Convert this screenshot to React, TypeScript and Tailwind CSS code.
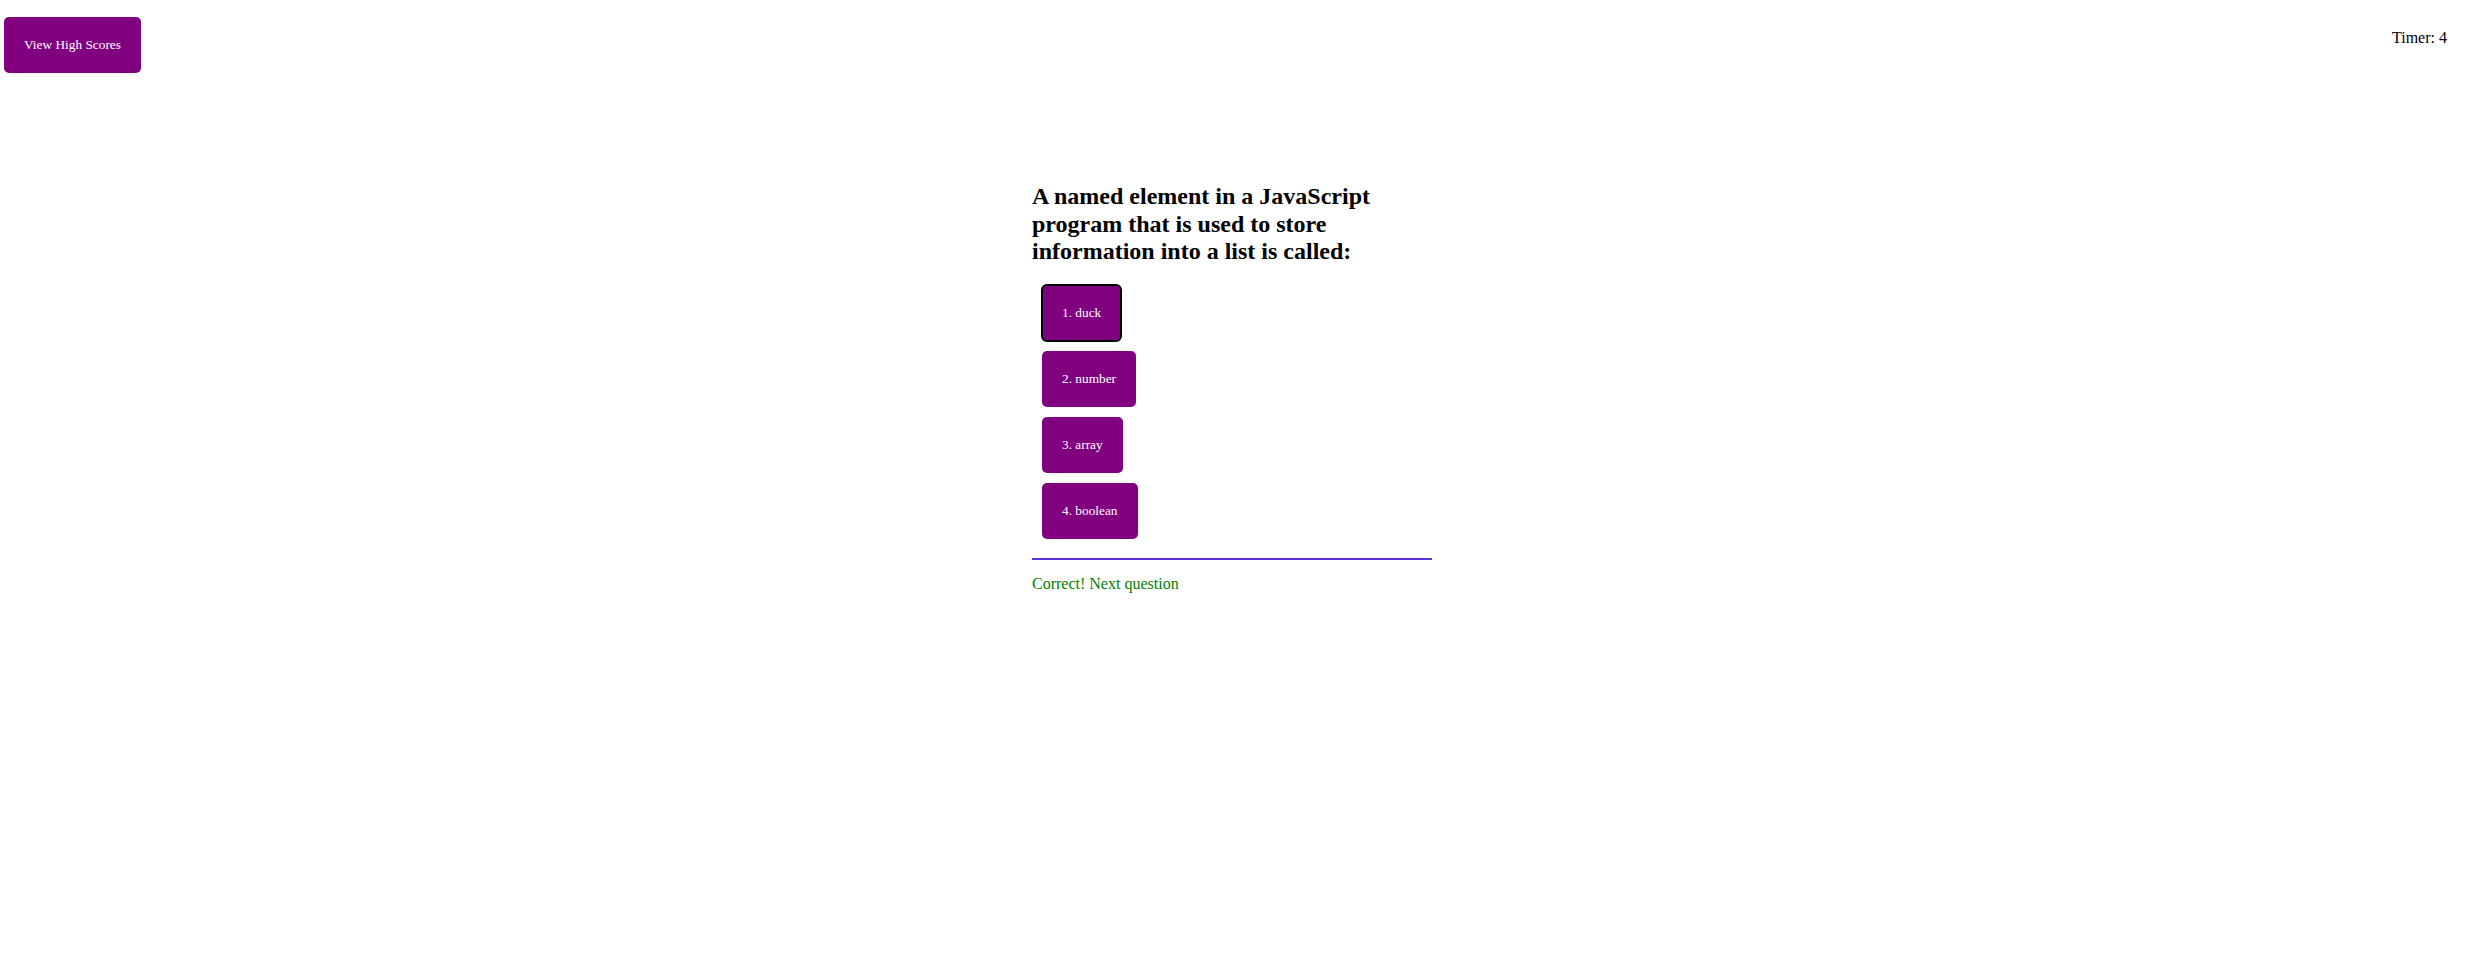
import React from "react";

export default function App() {
  const answers = ["1. duck", "2. number", "3. array", "4. boolean"];
  return (
    <div className="min-h-screen bg-white font-['Liberation_Serif','Times_New_Roman',serif] text-black">
      <header className="flex items-start justify-between h-[73px]">
        <button className="ml-[4px] mt-[17px] h-[56px] rounded-[5px] bg-[#800080] px-[20px] text-[13.33px] leading-[16px] text-white">
          View High Scores
        </button>
        <div className="mt-[29px] mr-[31px] text-[16px] leading-[18px]">Timer: 4</div>
      </header>
      <main className="mx-auto w-[414px] pr-[14px] pt-[110px]">
        <h2 className="text-[24px] font-bold leading-[27.6px]">
          A named element in a JavaScript program that is used to store information into a list is called:
        </h2>
        <div className="mt-[19px] flex flex-col items-start gap-[10px] pl-[10px]">
          {answers.map((a, i) => (
            <button
              key={a}
              className={
                i === 0
                  ? "h-[56px] rounded-[5px] bg-[#800080] px-[20px] text-[13.33px] leading-[16px] text-white outline-2 outline-solid outline-black outline-offset-[-1px]"
                  : "h-[56px] rounded-[5px] bg-[#800080] px-[20px] text-[13.33px] leading-[16px] text-white"
              }
            >
              {a}
            </button>
          ))}
        </div>
        <div className="mt-[19px] h-[2px] w-[400px] bg-[#5a32e0]" />
        <p className="mt-[15px] text-[16px] leading-[18.4px] text-[#008000]">Correct! Next question</p>
      </main>
    </div>
  );
}
